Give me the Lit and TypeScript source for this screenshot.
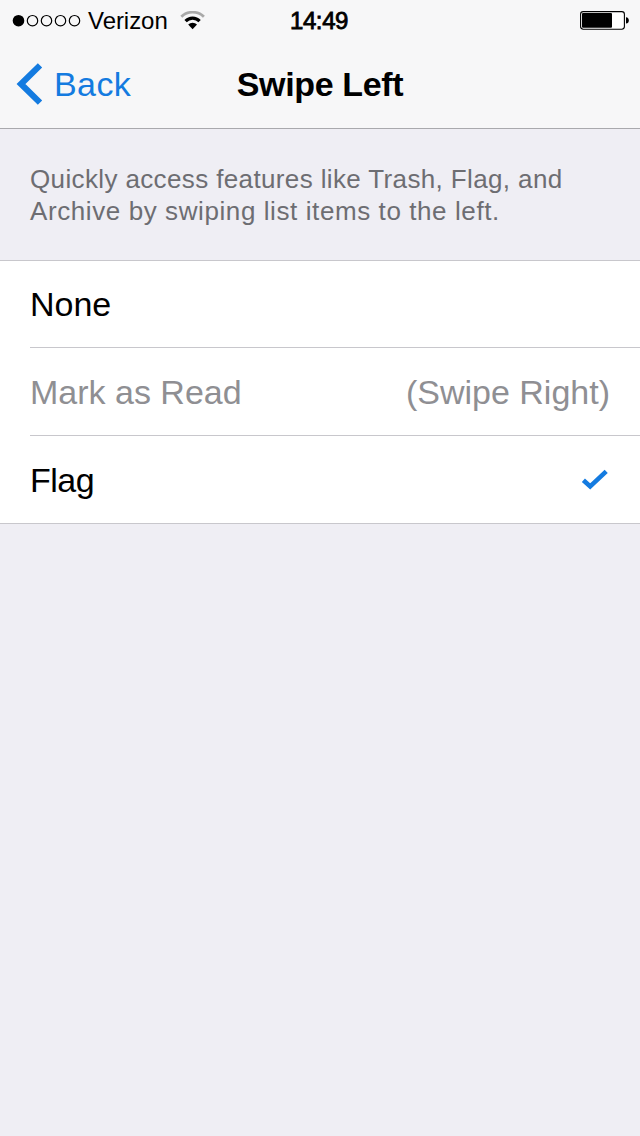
import { LitElement, html, css, svg } from "lit";
import { customElement, property } from "lit/decorators.js";

@customElement("status-bar")
class StatusBar extends LitElement {
  static styles = css`
    :host {
      display: grid;
      grid-template-columns: 1fr auto 1fr;
      align-items: center;
      height: 42px;
      padding: 0 11px 0 12px;
      box-sizing: border-box;
      font-size: 24px;
      line-height: 28px;
      color: #000;
    }
    .carrier {
      display: flex;
      align-items: center;
    }
    .dots {
      margin-right: 7px;
    }
    .name {
      letter-spacing: -0.05px;
      margin-right: 12px;
    }
    .time {
      -webkit-text-stroke: 0.8px #000;
      letter-spacing: -0.4px;
      margin-right: 3px;
    }
    .battery {
      justify-self: end;
      margin-bottom: 2px;
    }
    svg {
      display: block;
    }
  `;

  render() {
    return html`
      <div class="carrier">
        <svg class="dots" width="69" height="14" viewBox="0 0 69 14">
          <circle cx="6.5" cy="6.7" r="5.8" />
          ${[20.5, 34.5, 48.5, 62.5].map(
            (x) => svg`<circle cx=${x} cy="6.7" r="5.2" fill="none" stroke="#000" stroke-width="1.2" />`
          )}
        </svg>
        <span class="name">Verizon</span>
        <svg class="wifi" width="26" height="20" viewBox="0 0 26 20">
          <path d="M1.3 5.8A16.2 16.2 0 0 1 23.9 5.8" fill="none" stroke="#a9a9a9" stroke-width="2.8" />
          <path d="M5.6 10.2A9.6 9.6 0 0 1 19.6 10.2" fill="none" stroke="#000" stroke-width="3.2" />
          <path d="M8.2 13.6A6.4 6.4 0 0 1 17 13.6L12.6 18.2Z" />
        </svg>
      </div>
      <span class="time">14:49</span>
      <svg class="battery" width="50" height="20" viewBox="0 0 50 20">
        <rect x="1.6" y="1.6" width="43.8" height="17.6" rx="2.6" fill="#fff" stroke="#000" stroke-width="1.1" />
        <rect x="3" y="3" width="30" height="14.8" rx="1" />
        <path d="M47 7.2Q49.8 7.6 49.8 10.4T47 13.6Z" />
      </svg>
    `;
  }
}

@customElement("nav-bar")
class NavBar extends LitElement {
  @property() heading = "";

  static styles = css`
    :host {
      display: grid;
      grid-template-columns: 1fr auto 1fr;
      align-items: center;
      height: 87px;
      box-sizing: border-box;
      border-bottom: 1px solid #a9a9ad;
      padding: 0 16px 2px;
      font-size: 34px;
      line-height: 40px;
    }
    .back {
      display: flex;
      align-items: center;
      gap: 11px;
      color: #147be0;
      letter-spacing: 0.4px;
    }
    .title {
      font-weight: 700;
      letter-spacing: -0.35px;
      color: #000;
    }
    svg {
      display: block;
    }
  `;

  render() {
    return html`
      <div class="back">
        <svg width="27" height="42" viewBox="0 0 27 42">
          <path d="M24 2.4L5 21L24 39.6" fill="none" stroke="currentColor" stroke-width="6.2" />
        </svg>
        <span>Back</span>
      </div>
      <div class="title">${this.heading}</div>
    `;
  }
}

@customElement("option-row")
class OptionRow extends LitElement {
  @property() label = "";
  @property() detail = "";
  @property({ type: Boolean }) checked = false;

  static styles = css`
    :host {
      display: flex;
      align-items: center;
      justify-content: space-between;
      height: 88px;
      box-sizing: border-box;
      padding-right: 30px;
      font-size: 34px;
      line-height: 40px;
      color: #000;
    }
    :host([disabled]) {
      color: #8f8f93;
    }
    :host([checked]) {
      letter-spacing: -0.5px;
    }
    svg {
      display: block;
      margin-right: 1px;
    }
  `;

  render() {
    return html`
      <span>${this.label}</span>
      ${this.detail ? html`<span>${this.detail}</span>` : null}
      ${this.checked
        ? html`<svg width="28" height="22" viewBox="0 0 28 22">
            <path d="M2.4 11.2L9.2 17.4L25.2 2.4" fill="none" stroke="#147be0" stroke-width="4.6" />
          </svg>`
        : null}
    `;
  }
}

@customElement("app-root")
class AppRoot extends LitElement {
  static styles = css`
    :host {
      display: block;
      min-height: 1136px;
      background: #efeef4;
      font-family: "Liberation Sans", Arial, sans-serif;
    }
    .header {
      background: #f7f7f8;
    }
    .note {
      margin: 0;
      height: 131px;
      box-sizing: border-box;
      padding: 34px 30px 0;
      font-size: 26px;
      line-height: 32px;
      letter-spacing: 0.37px;
      color: #6d6d72;
    }
    .second {
      letter-spacing: 0.59px;
    }
    .list {
      background: #fff;
      border-top: 1px solid #c8c7cc;
      border-bottom: 1px solid #c8c7cc;
      padding-left: 30px;
    }
    .row {
      border-bottom: 1px solid #c8c7cc;
    }
    .first {
      height: 87px;
    }
    .last {
      border-bottom: none;
      height: 87px;
    }
  `;

  render() {
    return html`
      <div class="header">
        <status-bar></status-bar>
        <nav-bar heading="Swipe Left"></nav-bar>
      </div>
      <p class="note">
        Quickly access features like Trash, Flag, and<br /><span class="second"
          >Archive by swiping list items to the left.</span
        >
      </p>
      <div class="list">
        <option-row class="row first" label="None"></option-row>
        <option-row class="row" label="Mark as Read" detail="(Swipe Right)" disabled></option-row>
        <option-row class="row last" label="Flag" checked></option-row>
      </div>
    `;
  }
}
